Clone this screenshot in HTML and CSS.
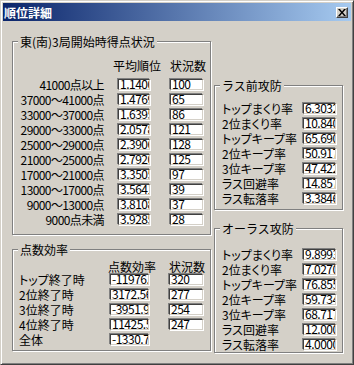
FILE: index.html
```html
<!DOCTYPE html>
<html lang="ja">
<head>
  <meta charset="UTF-8" />
  <title>順位詳細</title>
  <link rel="stylesheet" href="styles.css">
</head>
<body>
  <div class="window">
    <div class="titlebar">
      <span class="title">順位詳細</span>
      <span class="close">
        <svg width="8" height="7" viewBox="0 0 8 7"><path d="M0 0h2l2 2.5L6 0h2L5 3.5 8 7H6L4 4.5 2 7H0l3-3.5z" fill="#000"/></svg>
      </span>
    </div>

    <div class="client">
      <div class="col-left">
        <fieldset class="group g-start">
          <legend>東(南)3局開始時得点状況</legend>
          <div class="head"><span class="h1">平均順位</span><span class="h2">状況数</span></div>
          <div class="rows">
            <div class="row"><span class="lbl">41000点以上</span><span class="fld f1">1.1400</span><span class="fld f2">100</span></div>
            <div class="row"><span class="lbl">37000～41000点</span><span class="fld f1">1.4769</span><span class="fld f2">65</span></div>
            <div class="row"><span class="lbl">33000～37000点</span><span class="fld f1">1.6395</span><span class="fld f2">86</span></div>
            <div class="row"><span class="lbl">29000～33000点</span><span class="fld f1">2.0578</span><span class="fld f2">121</span></div>
            <div class="row"><span class="lbl">25000～29000点</span><span class="fld f1">2.3906</span><span class="fld f2">128</span></div>
            <div class="row"><span class="lbl">21000～25000点</span><span class="fld f1">2.7920</span><span class="fld f2">125</span></div>
            <div class="row"><span class="lbl">17000～21000点</span><span class="fld f1">3.3505</span><span class="fld f2">97</span></div>
            <div class="row"><span class="lbl">13000～17000点</span><span class="fld f1">3.5641</span><span class="fld f2">39</span></div>
            <div class="row"><span class="lbl">9000～13000点</span><span class="fld f1">3.8108</span><span class="fld f2">37</span></div>
            <div class="row"><span class="lbl">9000点未満</span><span class="fld f1">3.9285</span><span class="fld f2">28</span></div>
          </div>
        </fieldset>

        <fieldset class="group g-eff">
          <legend>点数効率</legend>
          <div class="head"><span class="h1">点数効率</span><span class="h2">状況数</span></div>
          <div class="rows">
            <div class="row"><span class="lbl">トップ終了時</span><span class="fld f1">-11976.</span><span class="fld f2">320</span></div>
            <div class="row"><span class="lbl">2位終了時</span><span class="fld f1">3172.56</span><span class="fld f2">277</span></div>
            <div class="row"><span class="lbl">3位終了時</span><span class="fld f1">-3951.9</span><span class="fld f2">254</span></div>
            <div class="row"><span class="lbl">4位終了時</span><span class="fld f1">11425.5</span><span class="fld f2">247</span></div>
            <div class="row"><span class="lbl">全体</span><span class="fld f1">-1330.7</span></div>
          </div>
        </fieldset>
      </div>

      <div class="col-right">
        <fieldset class="group g-side g-pre">
          <legend>ラス前攻防</legend>
          <div class="rows">
            <div class="row"><span class="lbl">トップまくり率</span><span class="fld">6.3032</span></div>
            <div class="row"><span class="lbl">2位まくり率</span><span class="fld">10.840</span></div>
            <div class="row"><span class="lbl">トップキープ率</span><span class="fld">65.690</span></div>
            <div class="row"><span class="lbl">2位キープ率</span><span class="fld">50.917</span></div>
            <div class="row"><span class="lbl">3位キープ率</span><span class="fld">47.422</span></div>
            <div class="row"><span class="lbl">ラス回避率</span><span class="fld">14.857</span></div>
            <div class="row"><span class="lbl">ラス転落率</span><span class="fld">3.3846</span></div>
          </div>
        </fieldset>

        <fieldset class="group g-side g-last">
          <legend>オーラス攻防</legend>
          <div class="rows">
            <div class="row"><span class="lbl">トップまくり率</span><span class="fld">9.8993</span></div>
            <div class="row"><span class="lbl">2位まくり率</span><span class="fld">7.0270</span></div>
            <div class="row"><span class="lbl">トップキープ率</span><span class="fld">76.855</span></div>
            <div class="row"><span class="lbl">2位キープ率</span><span class="fld">59.734</span></div>
            <div class="row"><span class="lbl">3位キープ率</span><span class="fld">68.717</span></div>
            <div class="row"><span class="lbl">ラス回避率</span><span class="fld">12.000</span></div>
            <div class="row"><span class="lbl">ラス転落率</span><span class="fld">4.0000</span></div>
          </div>
        </fieldset>
      </div>
    </div>
  </div>
</body>
</html>
```

FILE: styles.css
```css
body {
  margin: 0;
  font-family: "Noto Sans CJK JP", sans-serif;
  font-size: 12px;
  line-height: 13px;
  color: #000;
}
.window {
  width: 354px;
  height: 365px;
  box-sizing: border-box;
  background: #d4d0c8;
  border: 1px solid;
  border-color: #d4d0c8 #404040 #404040 #d4d0c8;
  box-shadow: inset 1px 1px #fff, inset -1px -1px #808080;
  padding: 2px;
}
.titlebar {
  height: 18px;
  display: flex;
  align-items: center;
  padding: 0 3px 0 1px;
  background: linear-gradient(to right, #0a246a, #a6caf0);
  color: #fff;
  font-weight: bold;
}
.title {
  flex: 1;
}
.close {
  width: 12px;
  height: 11px;
  box-sizing: border-box;
  display: flex;
  align-items: center;
  justify-content: center;
  background: #d4d0c8;
  border: 1px solid;
  border-color: #fff #404040 #404040 #fff;
  box-shadow: inset -1px -1px #808080;
}
.client {
  display: flex;
  padding-left: 9px;
}
.col-left {
  width: 199px;
  padding-top: 14px;
}
.col-right {
  width: 129px;
  margin-left: 3px;
  padding-top: 58px;
}
.group {
  margin: 0;
  padding: 0;
  min-width: 0;
  box-sizing: border-box;
  border: 1px solid #808080;
  box-shadow: inset 1px 1px #fff, 1px 1px #fff;
}
.group legend {
  margin-left: 5px;
  padding: 0 2px;
  line-height: 13px;
  background: #d4d0c8;
}
.head {
  display: flex;
}
.rows {
  display: flex;
  flex-direction: column;
  gap: 2px;
}
.row {
  display: flex;
  height: 13px;
  align-items: center;
}
.lbl {
  white-space: nowrap;
  font-feature-settings: "palt";
}
/* sunken edit box: inner ring is the border, outer ring the shadows */
.fld {
  height: 11px;
  box-sizing: border-box;
  border: 1px solid;
  border-color: #404040 #d4d0c8 #d4d0c8 #404040;
  box-shadow: -1px -1px #808080, 1px 1px #fff;
  background: #fff;
  padding-left: 1px;
  line-height: 7px;
  letter-spacing: -0.5px;
  overflow: hidden;
  white-space: nowrap;
}

/* 東(南)3局 */
.g-start {
  padding-bottom: 8px;
}
.g-start .head {
  margin-top: 11px;
}
.g-start .h1 {
  margin-left: 100px;
}
.g-start .h2 {
  margin-left: 9px;
}
.g-start .rows {
  margin-top: 6px;
}
.g-start .lbl {
  width: 91px;
  text-align: right;
  letter-spacing: -0.6px;
}
.g-start .f1 {
  width: 32px;
  margin-left: 14px;
}
.g-start .f2 {
  width: 33px;
  margin-left: 20px;
}

/* 点数効率 */
.g-eff {
  margin-top: 8px;
  padding-bottom: 4px;
}
.g-eff .head {
  margin-top: 4px;
}
.g-eff .h1 {
  margin-left: 95px;
}
.g-eff .h2 {
  margin-left: 13px;
}
.g-eff .rows {
  padding-left: 6px;
}
.g-eff .lbl {
  width: 90px;
}
.g-eff .f1 {
  width: 39px;
  margin-left: 1px;
}
.g-eff .f2 {
  width: 34px;
  margin-left: 20px;
}

/* ラス前 / オーラス */
.g-side .rows {
  padding-left: 7px;
}
.g-side .lbl {
  width: 80px;
}
.g-side .fld {
  width: 33px;
  margin-left: 1px;
}
.g-pre {
  padding-bottom: 4px;
}
.g-pre .rows {
  margin-top: 10px;
}
.g-last {
  margin-top: 12px;
  padding-bottom: 1px;
}
.g-last .rows {
  margin-top: 13px;
}
```
